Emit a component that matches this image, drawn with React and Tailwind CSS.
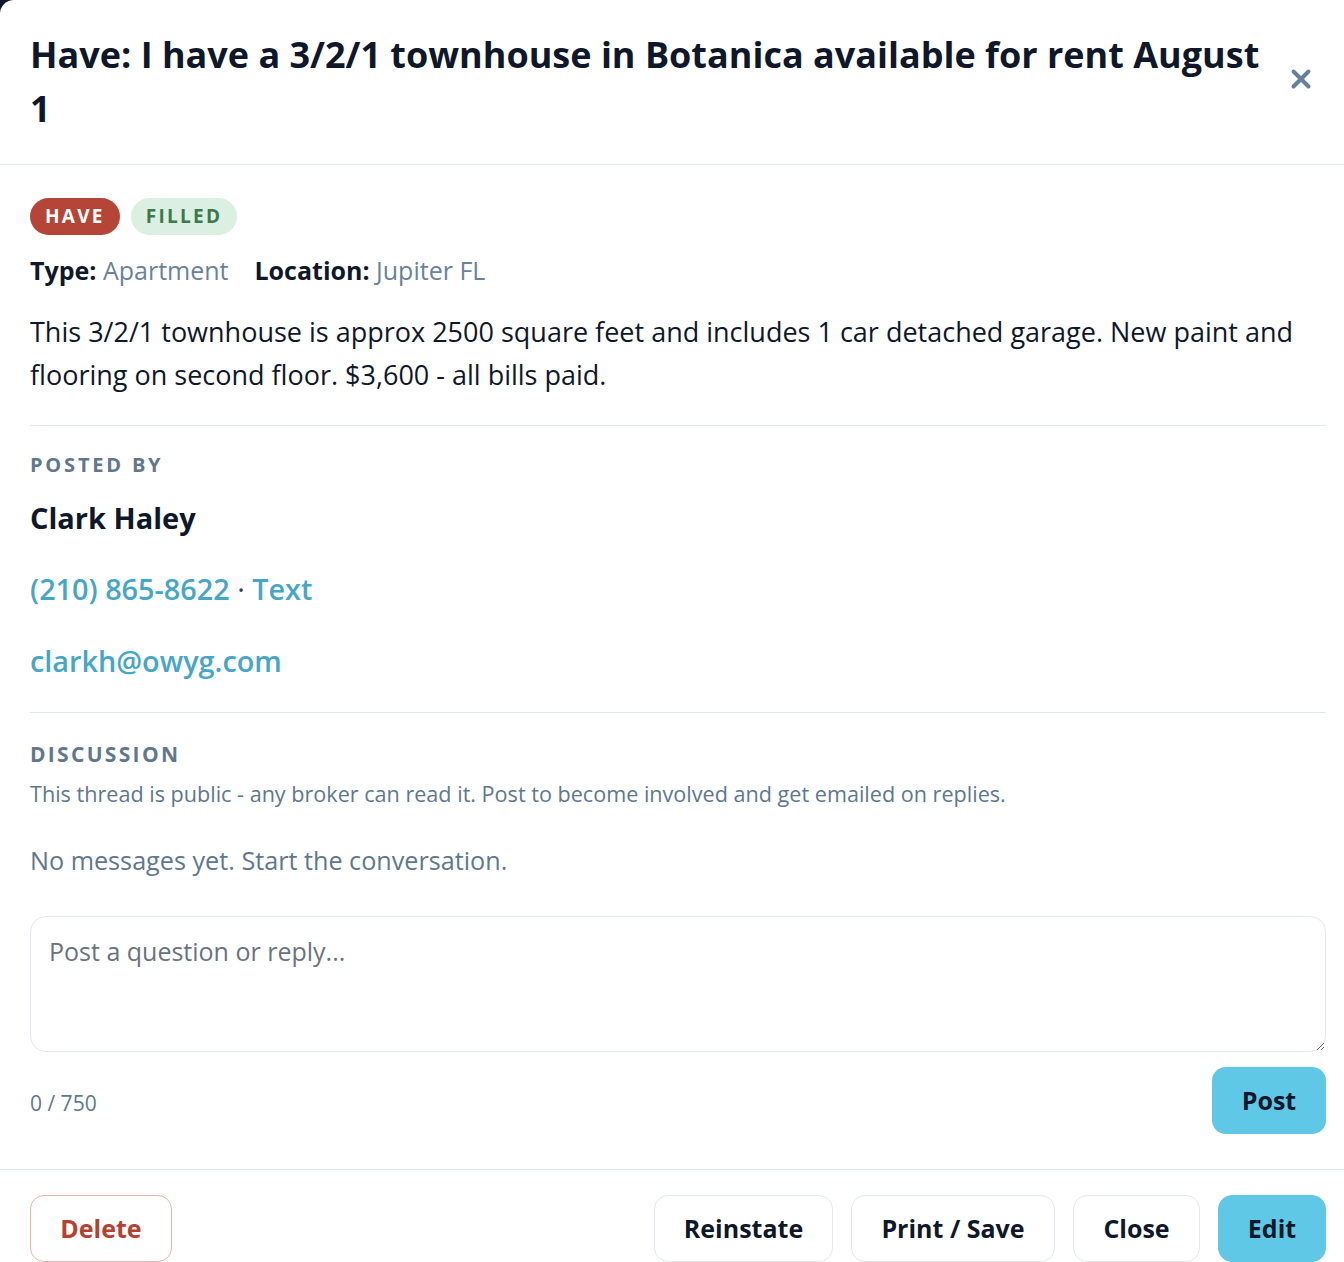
import { X } from "lucide-react";

function Badge({ children, className }) {
  return (
    <span className={`inline-flex items-center h-[37px] px-[15px] rounded-full text-[19px] font-bold tracking-[0.12em] ${className}`}>
      {children}
    </span>
  );
}

function Button({ children, className = "" }) {
  return (
    <button className={`h-[67px] px-7 rounded-[14px] border text-[25px] font-bold ${className}`}>
      {children}
    </button>
  );
}

export default function App() {
  return (
    <div className="h-[1262px] overflow-hidden bg-[#0f172a]" style={{ fontFamily: '"Open Sans", sans-serif' }}>
      <div className="h-full bg-white rounded-tl-[14px] flex flex-col">
        {/* Header */}
        <div className="flex items-center justify-between gap-4 pl-[30px] pr-[30px] py-7 border-b border-[#e2e8f0]">
          <h2 className="flex-1 max-w-[1250px] text-[36px] leading-[54px] font-bold text-[#0f172a]">
            Have: I have a 3/2/1 townhouse in Botanica available for rent August 1
          </h2>
          <X className="w-[30px] h-[30px] text-[#64809b] shrink-0 mr-[-2px] mb-[6px]" strokeWidth={3.2} />
        </div>

        {/* Body */}
        <div className="flex-1 flex flex-col pl-[30px] pr-[18px] pt-[33px]">
          <div className="flex gap-[11px]">
            <Badge className="bg-[#b54537] text-white">HAVE</Badge>
            <Badge className="bg-[#dcefe3] text-[#3b7a4b]">FILLED</Badge>
          </div>

          <div className="mt-[16px] flex gap-[26px] text-[25px] leading-[38px]">
            <div>
              <span className="font-bold text-[#0f172a]">Type:</span>{" "}
              <span className="text-[#6b819c]">Apartment</span>
            </div>
            <div>
              <span className="font-bold text-[#0f172a]">Location:</span>{" "}
              <span className="text-[#6b819c]">Jupiter FL</span>
            </div>
          </div>

          <p className="mt-[21px] pr-[12px] text-[27px] leading-[43px] text-[#0f172a]">
            This 3/2/1 townhouse is approx 2500 square feet and includes 1 car detached garage. New paint and flooring on second floor. $3,600 - all bills paid.
          </p>

          <div className="border-t border-[#e2e8f0] mt-[29px] pt-[24px]">
            <div className="text-[20px] leading-[30px] font-bold tracking-[0.14em] text-[#60778f]">POSTED BY</div>
            <div className="mt-[18px] text-[29px] leading-[40px] font-bold text-[#0f172a]">Clark Haley</div>
            <div className="mt-[31px] text-[28.8px] leading-[40px] font-semibold text-[#46a6c6]">
              <a>(210) 865-8622</a>
              <span className="text-[#334155] font-normal"> · </span>
              <a>Text</a>
            </div>
            <div className="mt-[32px] text-[28.8px] leading-[40px] font-semibold text-[#46a6c6]">clarkh@owyg.com</div>
          </div>

          <div className="border-t border-[#e2e8f0] mt-[31px] pt-[25px]">
            <div className="text-[21px] leading-[32px] font-bold tracking-[0.11em] text-[#60778f]">DISCUSSION</div>
            <p className="mt-[8px] text-[21.6px] leading-[32px] text-[#60778f]">
              This thread is public - any broker can read it. Post to become involved and get emailed on replies.
            </p>
            <p className="mt-[32px] text-[25.2px] leading-[36px] text-[#60778f]">No messages yet. Start the conversation.</p>

            <textarea
              placeholder="Post a question or reply..."
              className="mt-[38px] block w-full h-[136px] rounded-[16px] border border-[#e2e8f0] px-[18px] py-[16px] text-[25px] leading-[36px] placeholder:text-[#6b7280] outline-none"
            />

            <div className="mt-[15px] flex items-center justify-between">
              <span className="pt-[7px] text-[21px] text-[#60778f]">0 / 750</span>
              <button className="h-[67px] w-[114px] rounded-[14px] bg-[#5fc8e6] text-[25px] font-bold text-[#0f172a]">Post</button>
            </div>
          </div>
        </div>

        {/* Footer */}
        <div className="border-t border-[#e2e8f0] pl-[30px] pr-[18px] pt-[25px] flex items-start">
          <Button className="border-[#e8b4ae] text-[#b5402f] w-[142px]">Delete</Button>
          <div className="ml-auto flex gap-[18px]">
            <Button className="border-[#e2e8f0] text-[#0f172a] w-[179px]">Reinstate</Button>
            <Button className="border-[#e2e8f0] text-[#0f172a] w-[204px]">Print / Save</Button>
            <Button className="border-[#e2e8f0] text-[#0f172a] w-[127px]">Close</Button>
            <Button className="border-[#5fc8e6] bg-[#5fc8e6] text-[#0f172a] w-[108px]">Edit</Button>
          </div>
        </div>
      </div>
    </div>
  );
}
